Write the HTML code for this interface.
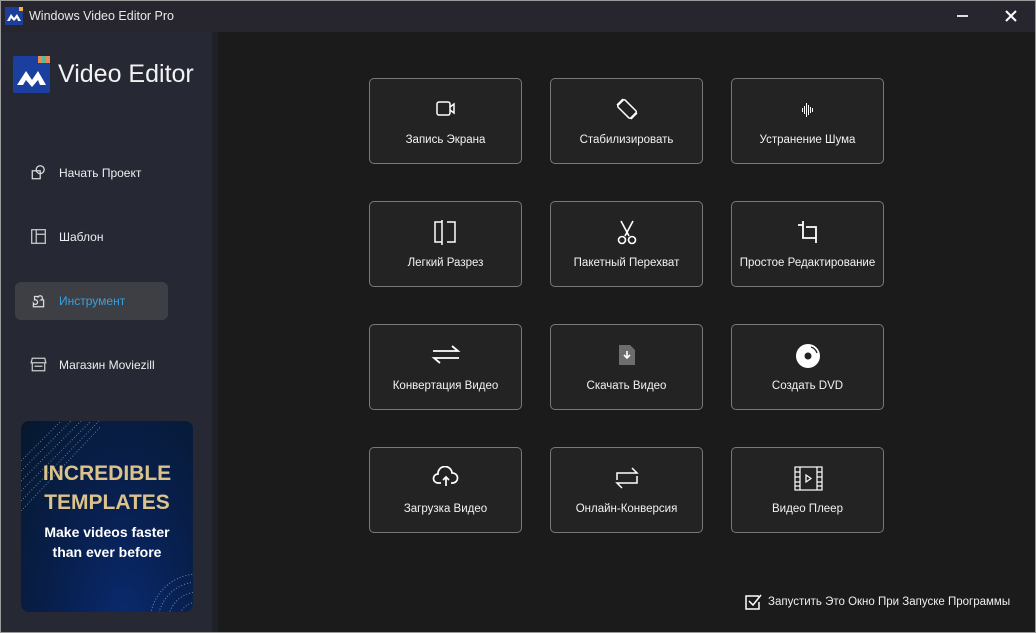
<!DOCTYPE html>
<html><head><meta charset="utf-8"><style>
*{margin:0;padding:0;box-sizing:border-box}
html,body{overflow:hidden}
body{width:1036px;height:633px;background:#1b1b1b;font-family:"Liberation Sans","DejaVu Sans",sans-serif;position:relative;color:#fff}
.frame{position:absolute;left:0;top:0;width:1036px;height:633px;border:1px solid #9a9a9a;pointer-events:none;z-index:10}
.title{position:absolute;left:0;top:0;width:1036px;height:32px;background:#27262f}
.title .t{position:absolute;left:29px;top:9px;font-size:12.5px;color:#e8e8e8}
.side{position:absolute;left:0;top:32px;width:212px;height:601px;background:#262934}
.strip{position:absolute;left:212px;top:32px;width:6px;height:601px;background:#1f2129}
.nav{position:absolute;left:30px;font-size:12px;color:#eee;display:flex;align-items:center;gap:12px}
.act{position:absolute;left:15px;top:282px;width:153px;height:38px;background:#3d3f45;border-radius:6px}
.card{position:absolute;width:153px;height:86px;border:1px solid #787878;border-radius:5px;background:#232323}
.card svg{position:absolute;left:50%;top:20px;transform:translateX(-50%)}
.card span{position:absolute;left:0;right:0;top:55px;text-align:center;font-size:11.5px;color:#f2f2f2}
.promo{position:absolute;left:21px;top:421px;width:172px;height:191px;border-radius:8px;background:radial-gradient(ellipse at 60% 110%,#0a2a70 0%,#08204f 45%,#06182e 100%);overflow:hidden;text-align:center}
</style></head><body>
<div class="title">
<svg style="position:absolute;left:5px;top:7px" width="18" height="18" viewBox="0 0 18 18"><rect width="18" height="18" fill="#1d3f9b"/><path d="M2 14 L6 7 L9 11 L12 7 L16 14 L13 14 L12 11 L9 14 L6 11 L5 14Z" fill="#fff"/><rect x="14" y="0" width="4" height="4" fill="#f3b23a"/></svg>
<div class="t">Windows Video Editor Pro</div>
<div style="position:absolute;left:957px;top:15px;width:11px;height:2px;background:#ddd"></div>
<svg style="position:absolute;left:1005px;top:10px" width="12" height="12" viewBox="0 0 12 12"><path d="M1 1L11 11M11 1L1 11" stroke="#fff" stroke-width="2"/></svg>
</div>
<div class="side"></div><div class="strip"></div>
<svg style="position:absolute;left:13px;top:56px" width="37" height="37" viewBox="0 0 37 37"><rect width="37" height="37" rx="2" fill="#1a3f9e"/><path d="M4 29 L13 15 L19 24 L25 15 L33 29 L27 29 L25 24 L19 31 L13 24 L10 29Z" fill="#fff"/><rect x="25" y="0" width="12" height="7" fill="#e85"/><rect x="29" y="0" width="4" height="7" fill="#5b9"/></svg>
<div style="position:absolute;left:58px;top:60px;font-size:25px;color:#f2f2f2">Video Editor</div>
<div class="nav" style="top:164px"><svg width="17" height="17" viewBox="0 0 15 15" fill="none" stroke="#ddd" stroke-width="1.1"><rect x="2" y="6" width="7" height="7"/><circle cx="9" cy="5" r="3.5"/></svg>Начать Проект</div>
<div class="nav" style="top:228px"><svg width="17" height="17" viewBox="0 0 15 15" fill="none" stroke="#ccc" stroke-width="1.1"><rect x="1.5" y="1.5" width="12" height="12"/><path d="M5.5 1.5V13.5M5.5 5.5H13.5"/></svg>Шаблон</div>
<div class="act"></div>
<div class="nav" style="top:292px;color:#3aa0e0"><svg width="17" height="17" viewBox="0 0 15 15" fill="none" stroke="#ddd" stroke-width="1.1"><path d="M3 13H12V7H10A2 2 0 1 0 7 5V4H4V7A2 2 0 1 1 3 10Z"/></svg>Инструмент</div>
<div class="nav" style="top:356px"><svg width="17" height="17" viewBox="0 0 15 15" fill="none" stroke="#ccc" stroke-width="1.1"><path d="M2 2H13L14 6H1Z M2 6V13H13V6 M4 9H11"/></svg>Магазин Moviezill</div>
<div class="promo">
<svg style="position:absolute;left:0;top:0" width="80" height="90"><g stroke="#8ab" stroke-width="1" stroke-dasharray="1 2" opacity=".7"><path d="M0 40L40 0M0 50L50 0M0 60L60 0M0 70L70 0M0 80L78 0M0 90L85 0"/></g></svg>
<svg style="position:absolute;right:0;bottom:0" width="50" height="45"><g stroke="#9bc" fill="none" stroke-dasharray="1 2" opacity=".7"><circle cx="55" cy="55" r="20"/><circle cx="55" cy="55" r="30"/><circle cx="55" cy="55" r="40"/><circle cx="55" cy="55" r="48"/></g></svg>
<div style="position:absolute;left:0;right:0;top:38px;font-size:21px;font-weight:bold;color:#dcc38c;line-height:29px">INCREDIBLE<br>TEMPLATES</div>
<div style="position:absolute;left:0;right:0;top:101px;font-size:14px;font-weight:bold;color:#fff;line-height:20px">Make videos faster<br>than ever before</div>
</div>

<div class="card" style="left:369px;top:78px"><svg width="26" height="20" viewBox="0 0 26 20" fill="none" stroke="#fff" stroke-width="1.5"><rect x="4" y="3" width="13" height="13" rx="2"/><path d="M17 8L21 5V14L17 11"/></svg><span>Запись Экрана</span></div>
<div class="card" style="left:550px;top:78px"><svg width="28" height="28" viewBox="0 0 28 28" fill="none" stroke="#fff" stroke-width="1.5" style="top:16px"><rect x="9" y="5" width="10" height="18" rx="1.5" transform="rotate(-45 14 14)"/><path d="M4 10L10 4M18 24L24 18"/></svg><span>Стабилизировать</span></div>
<div class="card" style="left:731px;top:78px"><svg width="24" height="22" viewBox="0 0 24 22" stroke="#fff" stroke-width="1"><path d="M6.5 9V13M8.5 7V15M10.5 4V18M12.5 6V16M14.5 8V14M16.5 9V13"/></svg><span>Устранение Шума</span></div>

<div class="card" style="left:369px;top:201px"><svg width="30" height="28" viewBox="0 0 30 28" fill="none" stroke="#fff" stroke-width="1.5" style="top:16px"><path d="M11 2V27M11 4H4V24H11M16 4H24V24H16"/></svg><span>Легкий Разрез</span></div>
<div class="card" style="left:550px;top:201px"><svg width="26" height="28" viewBox="0 0 26 28" fill="none" stroke="#fff" stroke-width="1.6" style="top:16px"><path d="M7 3L15 18M19 3L11 18"/><circle cx="8" cy="22" r="3.5"/><circle cx="18" cy="22" r="3.5"/></svg><span>Пакетный Перехват</span></div>
<div class="card" style="left:731px;top:201px"><svg width="26" height="28" viewBox="0 0 26 28" fill="none" stroke="#fff" stroke-width="1.8" style="top:16px"><path d="M3 7H8M8 3V20H21M21 25V9H11"/></svg><span>Простое Редактирование</span></div>

<div class="card" style="left:369px;top:324px"><svg width="30" height="24" viewBox="0 0 30 24" fill="none" stroke="#fff" stroke-width="1.8" style="top:18px"><path d="M2 8H27L21 3M28 15H3L9 20"/></svg><span>Конвертация Видео</span></div>
<div class="card" style="left:550px;top:324px"><svg width="22" height="26" viewBox="0 0 22 26" style="top:18px"><path d="M3 2H14L19 7V22H3Z" fill="#6d6d6d"/><path d="M11 8V15M8 12L11 15L14 12" stroke="#fff" stroke-width="1.6" fill="none"/></svg><span>Скачать Видео</span></div>
<div class="card" style="left:731px;top:324px"><svg width="28" height="28" viewBox="0 0 28 28" style="top:17px"><circle cx="14" cy="14" r="12" fill="#fff"/><circle cx="14" cy="14" r="3.5" fill="#232323"/><path d="M17 5A9 9 0 0 1 23 11" stroke="#232323" stroke-width="1.3" fill="none"/></svg><span>Создать DVD</span></div>

<div class="card" style="left:369px;top:447px"><svg width="28" height="24" viewBox="0 0 28 24" fill="none" stroke="#fff" stroke-width="1.7" style="top:18px"><path d="M9 17H6A4.5 4.5 0 0 1 6 8A7 7 0 0 1 20 7A5 5 0 0 1 21 17H19M14 20V11M11 14L14 11L17 14"/></svg><span>Загрузка Видео</span></div>
<div class="card" style="left:550px;top:447px"><svg width="28" height="28" viewBox="0 0 28 28" fill="none" stroke="#fff" stroke-width="1.5" style="top:16px"><path d="M4 16V9H24L19 4M24 12V19H4L9 24"/></svg><span>Онлайн-Конверсия</span></div>
<div class="card" style="left:731px;top:447px"><svg width="30" height="26" viewBox="0 0 30 26" fill="none" stroke="#fff" stroke-width="1.2" style="top:17px"><rect x="2" y="2" width="27" height="23"/><path d="M7 2V25M24 2V25M2 7H7M2 12H7M2 17H7M2 21H7M24 7H29M24 12H29M24 17H29M24 21H29M13 10L18 13.5L13 17Z"/></svg><span>Видео Плеер</span></div>

<svg style="position:absolute;left:744px;top:593px" width="19" height="18" viewBox="0 0 19 18" fill="none" stroke="#fff" stroke-width="1.5"><path d="M14 4V3H2V16H15V9M5 8L9 12L17 2"/></svg>
<div style="position:absolute;left:768px;top:596px;font-size:11.5px;color:#eee">Запустить Это Окно При Запуске Программы</div>
<div class="frame"></div>
</body></html>
